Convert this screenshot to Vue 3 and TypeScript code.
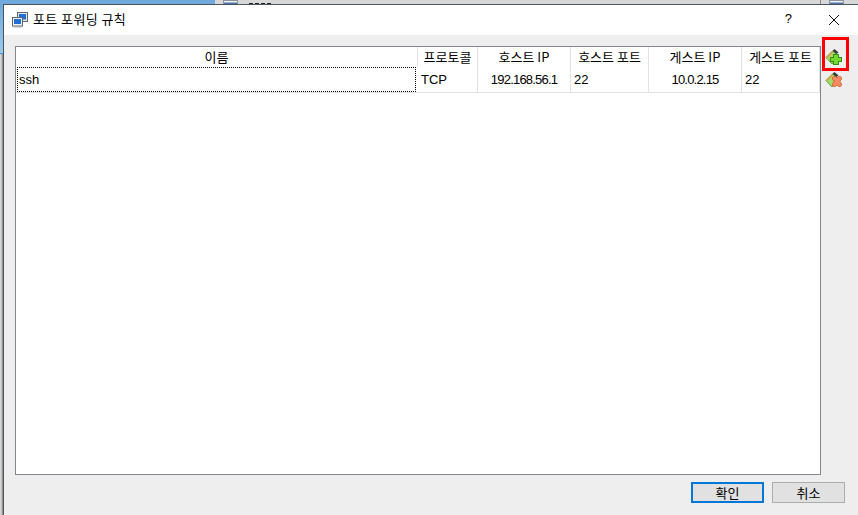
<script setup lang="ts">
interface Rule {
  name: string;
  proto: string;
  hostIp: string;
  hostPort: string;
  guestIp: string;
  guestPort: string;
}

const columns = [
  { label: "이름", width: 402 },
  { label: "프로토콜", width: 60 },
  { label: "호스트 IP", width: 93 },
  { label: "호스트 포트", width: 78 },
  { label: "게스트 IP", width: 93 },
  { label: "게스트 포트", width: 78 },
];

const rules: Rule[] = [
  { name: "ssh", proto: "TCP", hostIp: "192.168.56.1", hostPort: "22", guestIp: "10.0.2.15", guestPort: "22" },
];
</script>

<template>
  <div class="desktop">
    <div class="backdrop">
      <div class="back-blue"></div>
      <div class="back-gray">
        <i class="win-icon"></i>
        <i class="bits"></i>
        <i class="divider"></i>
        <i class="win-icon end"></i>
      </div>
    </div>
    <div class="dialog">
      <header class="titlebar">
        <svg class="app-icon" width="16" height="16" viewBox="0 0 16 16">
          <rect x="5.5" y="0.5" width="10" height="9" fill="#e6e8ec" stroke="#5f6670" />
          <rect x="7" y="2" width="7" height="5.5" fill="#1f6fd6" />
          <rect x="0.5" y="5.5" width="10" height="8.5" fill="#f2f3f5" stroke="#5f6670" />
          <rect x="2" y="7" width="7" height="5" fill="#1f6fd6" />
          <rect x="1.5" y="14" width="8" height="1.5" fill="#a4a9b0" />
        </svg>
        <span class="title">포트 포워딩 규칙</span>
        <span class="help">?</span>
        <svg class="close" width="12" height="12" viewBox="0 0 12 12">
          <path d="M1 1 L11 11 M11 1 L1 11" stroke="#111" stroke-width="1" fill="none" />
        </svg>
      </header>
      <div class="body">
        <div class="main">
          <div class="table">
            <div class="head-row">
              <div v-for="c in columns" :key="c.label" class="head-cell" :style="{ width: c.width + 'px' }">{{ c.label }}</div>
            </div>
            <div v-for="r in rules" :key="r.name" class="row">
              <div class="cell name" :style="{ width: columns[0].width + 'px' }"><span class="focus">{{ r.name }}</span></div>
              <div class="cell" :style="{ width: columns[1].width + 'px' }">{{ r.proto }}</div>
              <div class="cell center" :style="{ width: columns[2].width + 'px' }">{{ r.hostIp }}</div>
              <div class="cell" :style="{ width: columns[3].width + 'px' }">{{ r.hostPort }}</div>
              <div class="cell center" :style="{ width: columns[4].width + 'px' }">{{ r.guestIp }}</div>
              <div class="cell" :style="{ width: columns[5].width + 'px' }">{{ r.guestPort }}</div>
            </div>
          </div>
          <div class="side">
            <div class="highlight"></div>
            <svg class="tool" width="18" height="18" viewBox="0 0 18 18">
              <path d="M1 9.5 L7.5 3 L14 8 L7 16 Z" fill="#a4dc6a" stroke="#4c8f28" stroke-width="0.8" />
              <path d="M1.8 9.5 L7.5 3.8" stroke="#f0913f" stroke-width="1.2" fill="none" />
              <path d="M7.5 2.8 L9.5 1 L13.5 4.5 L11.5 6 Z" fill="#3a3a3a" />
              <path d="M8.5 6.5 h5 v3 h3 v4 h-3 v3 h-5 v-3 h-3 v-4 h3 z" fill="#74d92f" stroke="#3a8a18" shape-rendering="crispEdges" />
            </svg>
            <svg class="tool" width="18" height="18" viewBox="0 0 18 18">
              <path d="M1 9.5 L7.5 3 L14 8 L7 16 Z" fill="#a4dc6a" stroke="#4c8f28" stroke-width="0.8" />
              <path d="M1.8 9.5 L7.5 3.8" stroke="#f0913f" stroke-width="1.2" fill="none" />
              <path d="M7.5 2.8 L9.5 1 L13.5 4.5 L11.5 6 Z" fill="#3a3a3a" />
              <path d="M8.5 5.5 h2 l1.5 1.5 l1.5 -1.5 h2 l1 1 v2 l-1.5 1.5 v1 l1.5 1.5 v2 l-1 1 h-2 l-1.5 -1.5 l-1.5 1.5 h-2 l-1 -1 v-2 l1.5 -1.5 v-1 l-1.5 -1.5 v-2 z" fill="#f58a62" stroke="#cf5a30" stroke-width="0.8" />
            </svg>
          </div>
        </div>
        <footer class="buttons">
          <button class="btn default">확인</button>
          <button class="btn">취소</button>
        </footer>
      </div>
    </div>
  </div>
</template>

<style>
html, body { margin: 0; overflow: hidden; }
</style>

<style scoped>
.desktop {
  position: relative;
  width: 858px;
  height: 515px;
  overflow: hidden;
  font-family: "Noto Sans CJK KR", "Liberation Sans", sans-serif;
  background: linear-gradient(to right, #e4e4e4 0, #b0b0b0 2px, #808080 3px);
}
.backdrop {
  display: flex;
  height: 54px;
}
.back-blue {
  width: 215px;
  box-sizing: border-box;
  border-bottom: 1px solid #4a90d0;
  background: linear-gradient(#6fa8dc, #9cc8ea);
}
.back-gray {
  flex: 1;
  height: 4px;
  display: flex;
  align-items: flex-start;
  overflow: hidden;
  background: #d8d8d8;
}
.win-icon {
  margin-left: 8px;
  width: 15px;
  height: 8px;
  box-sizing: border-box;
  border: 1px solid #8a929c;
  background: linear-gradient(#eef0f2 1px, #4c76aa 2px);
  flex: 0 0 auto;
}
.win-icon.end { margin-left: 8px; margin-right: 14px; }
.bits {
  margin: 3px 0 0 11px;
  width: 22px;
  height: 1px;
  background: repeating-linear-gradient(to right, #222 0 4px, transparent 4px 6px);
  flex: 0 0 auto;
}
.divider {
  margin-left: auto;
  width: 1px;
  height: 4px;
  background: #8a8a8a;
  flex: 0 0 auto;
}
.dialog {
  position: absolute;
  left: 3px;
  top: 4px;
  width: 855px;
  height: 511px;
  box-sizing: border-box;
  border-left: 1px solid #4a5560;
  border-top: 1px solid #4a5560;
  background: #eeeeee;
  display: flex;
  flex-direction: column;
}
.titlebar {
  height: 30px;
  background: #fff;
  display: flex;
  align-items: center;
  padding-left: 8px;
  flex: 0 0 auto;
}
.title {
  margin-left: 5px;
  font-size: 13px;
  line-height: 28px;
  height: 30px;
  color: #000;
  letter-spacing: 0.4px;
}
.help {
  margin-left: auto;
  margin-right: 36px;
  font-size: 13px;
  line-height: 28px;
  height: 30px;
  font-family: "Liberation Sans", sans-serif;
}
.close { margin-right: 18px; }
.body {
  flex: 1;
  display: flex;
  flex-direction: column;
  padding: 11px 0 12px 11px;
  min-height: 0;
}
.main { flex: 1; display: flex; min-height: 0; }
.table {
  width: 806px;
  box-sizing: border-box;
  border: 1px solid #82878f;
  background: #fff;
}
.head-row { display: flex; height: 20px; }
.head-cell {
  box-sizing: border-box;
  text-align: center;
  font-size: 13px;
  line-height: 20px;
  border-right: 1px solid #e3e3e3;
  flex: 0 0 auto;
}
.row {
  display: flex;
  height: 26px;
  box-sizing: border-box;
  border-bottom: 1px solid #e3e3e3;
  font-family: "Liberation Sans", sans-serif;
  font-size: 13px;
}
.cell {
  box-sizing: border-box;
  flex: 0 0 auto;
  padding-left: 3px;
  line-height: 25px;
  border-right: 1px solid #e3e3e3;
}
.cell.center { text-align: center; padding-left: 0; letter-spacing: -0.8px; }
.cell.name { padding: 0 2px 0 1px; border-right: none; }
.focus {
  display: block;
  height: 25px;
  box-sizing: border-box;
  border: 1px dotted #000;
  line-height: 23px;
  padding-left: 1px;
}
.side {
  position: relative;
  width: 37px;
  display: flex;
  flex-direction: column;
  gap: 5px;
  padding: 2px 0 0 4px;
  box-sizing: border-box;
}
.tool { display: block; flex: 0 0 auto; }
.highlight {
  position: absolute;
  left: 1px;
  top: -9px;
  width: 27px;
  height: 34px;
  box-sizing: border-box;
  border: 3px solid #f00;
}
.buttons {
  display: flex;
  justify-content: flex-end;
  gap: 8px;
  padding-top: 7px;
  padding-right: 13px;
  flex: 0 0 auto;
}
.btn {
  width: 73px;
  height: 21px;
  box-sizing: border-box;
  background: #e1e1e1;
  border: 1px solid #adadad;
  font-family: inherit;
  font-size: 13px;
  line-height: 17px;
  padding: 0;
  color: #000;
}
.btn.default { border: 2px solid #0078d7; }
</style>
